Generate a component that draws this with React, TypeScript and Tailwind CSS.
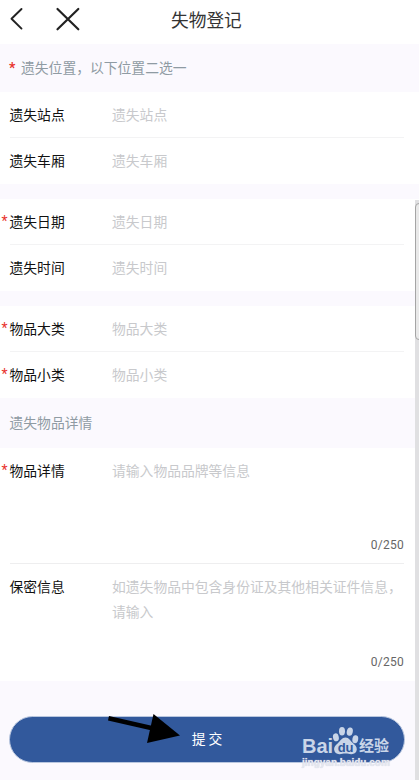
import React from 'react';

interface Field {
    label: string;
    placeholder: string;
    required?: boolean;
}

const stationFields: Field[] = [
    { label: '遗失站点', placeholder: '遗失站点' },
    { label: '遗失车厢', placeholder: '遗失车厢' },
];

const timeFields: Field[] = [
    { label: '遗失日期', placeholder: '遗失日期', required: true },
    { label: '遗失时间', placeholder: '遗失时间' },
];

const categoryFields: Field[] = [
    { label: '物品大类', placeholder: '物品大类', required: true },
    { label: '物品小类', placeholder: '物品小类', required: true },
];

const FieldLabel: React.FC<{ label: string; required?: boolean }> = ({ label, required }) => (
    <div className="flex w-[112px] shrink-0 text-[#111]">
        <span className="w-[9.5px] shrink-0 pl-[1.5px] font-['Roboto',sans-serif] text-[14px] text-[#e8322d]">{required ? '*' : ''}</span>
        <span>{label}</span>
    </div>
);

const FieldGroup: React.FC<{ fields: Field[] }> = ({ fields }) => (
    <div className="h-[92px] bg-white">
        {fields.map((field, i) => (
            <div key={field.label}>
                {i > 0 && <div className="ml-[10px] mr-[15px] h-px bg-[#f3f3f4]" />}
                <div className={`flex items-center ${i > 0 ? 'h-[46px] pb-[2px]' : 'h-[45px] pb-px'}`}>
                    <FieldLabel label={field.label} required={field.required} />
                    <span className="text-[#c8c9cc]">{field.placeholder}</span>
                </div>
            </div>
        ))}
    </div>
);

const TextAreaField: React.FC<{ field: Field; className: string }> = ({ field, className }) => (
    <div className={`flex flex-col justify-between bg-white pr-[15px] ${className}`}>
        <div className="flex leading-[25px]">
            <FieldLabel label={field.label} required={field.required} />
            <span className="-mr-[5px] text-[#c8c9cc]">{field.placeholder}</span>
        </div>
        <div className="text-right font-[Roboto,sans-serif] text-[12px] leading-[16px] tracking-[0.25px] text-[#666]">0/250</div>
    </div>
);

const Watermark: React.FC = () => (
    <div className="absolute left-[301px] top-[726px] h-[46px] w-[95px] text-[#c9d5e8]">
        <div className="flex h-[31px] items-start font-['Liberation_Sans','Noto_Sans_CJK_SC',sans-serif] font-bold">
            <span className="w-[31px] pl-px pt-[9px] text-[20px] leading-[23px]">Bai</span>
            <svg className="shrink-0" width="27" height="31" viewBox="0 0 27 31">
                <g fill="#c9d5e8">
                    <ellipse cx="3.9" cy="11.3" rx="2.9" ry="4" transform="rotate(-12 3.9 11.3)" />
                    <ellipse cx="10" cy="5.3" rx="3" ry="4.2" />
                    <ellipse cx="17.8" cy="5.6" rx="3" ry="4.2" transform="rotate(12 17.8 5.6)" />
                    <ellipse cx="23.3" cy="13.3" rx="2.9" ry="4" transform="rotate(10 23.3 13.3)" />
                    <path d="M13.5 11.5c-3.7 0-5 3.3-7.4 5.4-2.3 2-4.3 3.6-4 6.7.3 3 2.6 4.8 5.6 4.6 2-.1 3.6-.6 5.8-.6s3.6.5 5.7.6c3 .1 5.4-1.6 5.6-4.6.2-3.1-1.9-4.7-4.2-6.8-2.2-2-3.5-5.3-7.1-5.3z" />
                </g>
                <text x="13.6" y="26" textAnchor="middle" fill="#32599c" fontSize="13" fontWeight="700" fontFamily="Liberation Sans, sans-serif">du</text>
            </svg>
            <span className="whitespace-nowrap pt-[9px] text-[15px] leading-[22px]">经验</span>
        </div>
        <div className="h-[14px] whitespace-nowrap pl-px font-['Liberation_Sans',sans-serif] text-[10px] font-bold leading-[12px] text-[#e5e7f0] [text-shadow:0_0_1px_#cfd3df]">jingyan.baidu.com</div>
    </div>
);

const App: React.FC = () => {
    return (
        <div className="relative h-[780px] w-[419px] overflow-hidden bg-[#fbf9fe] font-['Noto_Sans_CJK_SC',sans-serif] text-[13.8px] leading-[20px]">
            <header className="flex h-[44px] items-start bg-white">
                <svg className="shrink-0" width="100" height="38" viewBox="0 0 100 38" fill="none" stroke="#222" strokeWidth="1.9" strokeLinecap="round">
                    <path d="M21.5 9 11.5 18.8 21.5 28.6" strokeLinejoin="round" />
                    <path d="M57.5 9 78.3 29.3M78.3 9 57.5 29.3" strokeWidth="2.2" />
                </svg>
                <h1 className="pl-[71px] text-[17.7px] leading-[38px] text-[#333]">失物登记</h1>
            </header>

            <div className="flex h-[48px] items-center pb-[3px] pl-[9px] text-[#8f9ba3]">
                <span className="w-[12px] pt-[2px] font-['Roboto',sans-serif] text-[14px] font-bold text-[#e8322d]">*</span>
                <span>遗失位置，以下位置二选一</span>
            </div>

            <div className="space-y-[15px]">
                <FieldGroup fields={stationFields} />
                <FieldGroup fields={timeFields} />
                <FieldGroup fields={categoryFields} />
            </div>

            <div className="flex h-[50px] items-center pb-[3px] pl-[9.5px] text-[#8f9ba3]">遗失物品详情</div>

            <TextAreaField
                field={{ label: '物品详情', placeholder: '请输入物品品牌等信息', required: true }}
                className="h-[115px] pb-[10px] pt-[10px]"
            />
            <div className="bg-white pl-[10px] pr-[15px]">
                <div className="h-px bg-[#eeeeef]" />
            </div>
            <TextAreaField
                field={{ label: '保密信息', placeholder: '如遗失物品中包含身份证及其他相关证件信息，请输入' }}
                className="h-[117px] pb-[11px] pt-[10px]"
            />

            <div className="pl-[9px] pr-[14px] pt-[35px]">
                <button className="block h-[47px] w-full rounded-full border border-[#b9c7df] bg-[#32599c] pb-[3px] text-white">提 交</button>
            </div>

            {/* pointer towards the submit button */}
            <svg className="absolute left-[106px] top-[712px]" width="76" height="34" viewBox="0 0 76 34">
                <path d="M3 4 49 14.5 48 19 2 8.5z" />
                <path d="M47.5 2 74 23.5 41 31z" />
            </svg>

            <Watermark />

            {/* scrollbar */}
            <div className="absolute right-0 top-[200px] h-[580px] w-[4px] bg-[#e0e0e2]">
                <div className="mt-[3px] h-[137px] w-[8px] rounded-[4px] border border-[#a5a5a5] bg-[#e9e9e9]" />
            </div>
        </div>
    );
};

export default App;
